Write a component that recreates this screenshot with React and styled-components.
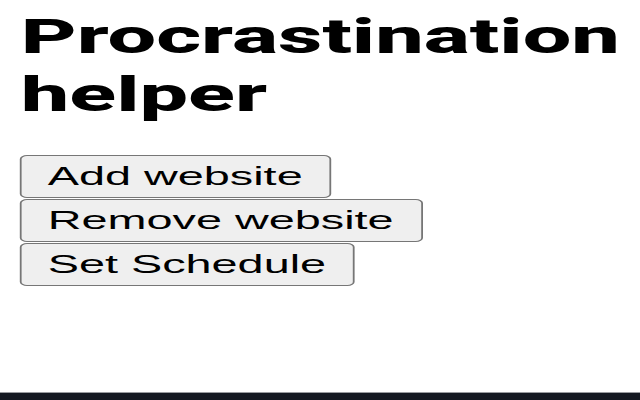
import styled, { createGlobalStyle } from "styled-components";

// The reference is a popup screenshot that was stretched wider than tall,
// so the page is laid out narrow and widened by the Stage transform.
const STRETCH_X = 1.8;

const GlobalStyle = createGlobalStyle`
  html, body {
    margin: 0;
    padding: 0;
    background: #fff;
    overflow: hidden;
  }
`;

const Stage = styled.div`
  width: ${640 / STRETCH_X}px;
  height: 400px;
  transform: scale(${STRETCH_X}, 1);
  transform-origin: 0 0;

  display: flex;
  flex-direction: column;
`;

const Content = styled.main`
  padding: 8px 10.5px 0 10.5px;
`;

const Title = styled.h1`
  margin: 0 0 31px 1px;
  font-family: Roboto, "Liberation Sans", sans-serif;
  font-size: 48px;
  font-weight: 800;
  line-height: 58px;
  color: #000;
`;

const Actions = styled.div`
  display: flex;
  flex-direction: column;
  align-items: flex-start;
  gap: 1px;
`;

const Button = styled.button`
  padding: 6px 15px;

  font-family: "Liberation Sans", Arial, sans-serif;
  font-size: 26px;
  line-height: 29px;
  color: #000;
  background: #efefef;
  border: 1px solid #767676;
  border-radius: 4px;
  cursor: pointer;

  &:hover {
    background: #e5e5e5;
  }
`;

const BottomBar = styled.footer`
  margin-top: auto;
  height: 7px;
  background: #151922;
  border-top: 1px solid #9a9ca0;
`;

const App = () => {
  return (
    <>
      <GlobalStyle />
      <Stage>
        <Content>
          <Title>Procrastination helper</Title>
          <Actions>
            <Button>Add website</Button>
            <Button>Remove website</Button>
            <Button>Set Schedule</Button>
          </Actions>
        </Content>
        <BottomBar />
      </Stage>
    </>
  );
};

export default App;
